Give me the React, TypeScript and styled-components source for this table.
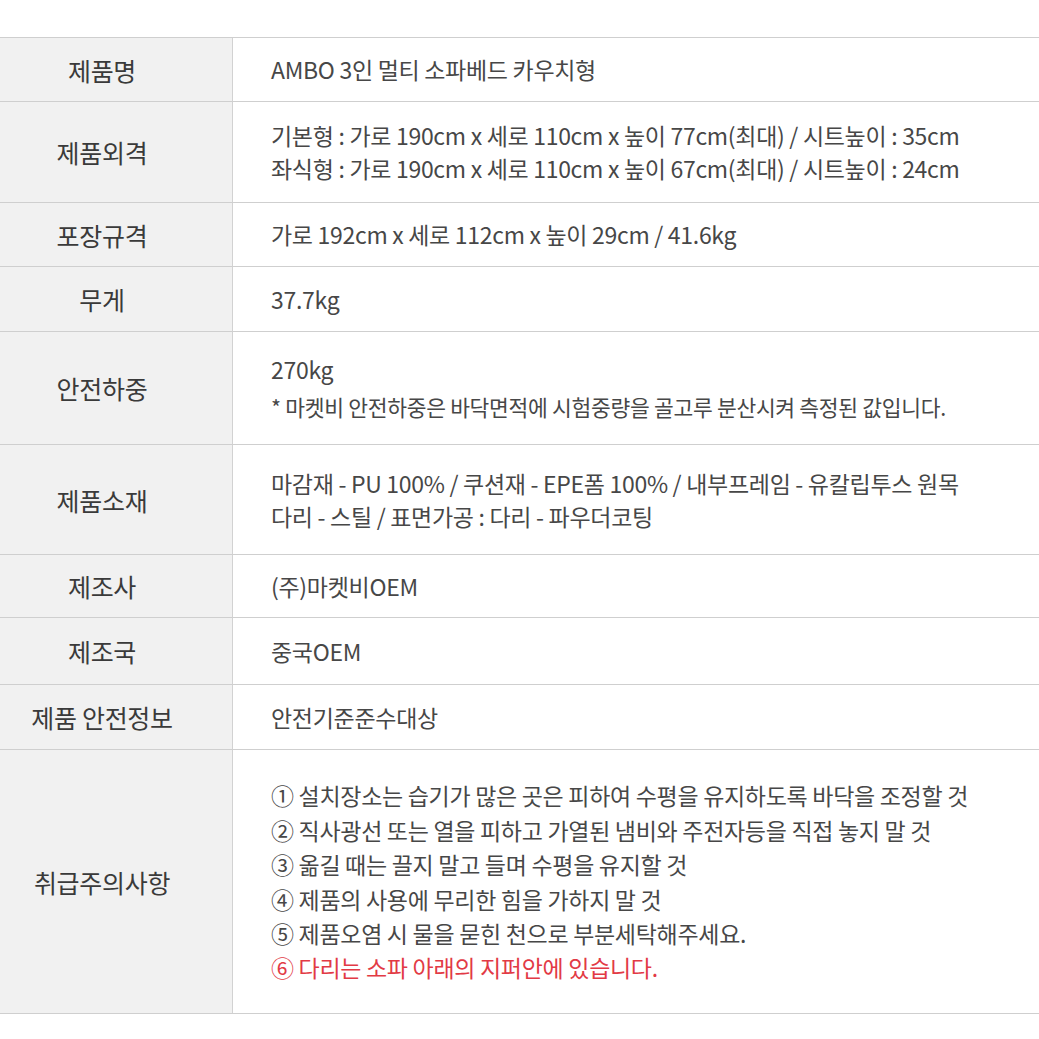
import React from "react";
import styled, { createGlobalStyle } from "styled-components";

const Global = createGlobalStyle`
  html, body { margin: 0; padding: 0; background: #fff; }
  body { font-family: "Noto Sans CJK KR", "Noto Sans", sans-serif; }
`;

const Page = styled.div`
  width: 1039px;
  height: 1039px;
  padding-top: 37px;
  box-sizing: border-box;
  background: #fff;
`;

const Table = styled.div`
  display: grid;
  grid-template-columns: 233px 1fr;
  border-top: 1px solid #cfcfcf;
`;

const Label = styled.div<{ $h: number }>`
  height: ${(p) => p.$h}px;
  box-sizing: border-box;
  padding-right: 28px;
  display: flex;
  align-items: center;
  justify-content: center;
  background: #f1f1f1;
  border-right: 1px solid #d2d2d2;
  border-bottom: 1px solid #cfcfcf;
  color: #3a3a3a;
  font-size: 25px;
  letter-spacing: -0.3px;
  white-space: nowrap;
`;

const Value = styled.div<{ $h: number }>`
  height: ${(p) => p.$h}px;
  box-sizing: border-box;
  display: flex;
  flex-direction: column;
  justify-content: center;
  padding-left: 38px;
  border-bottom: 1px solid #cfcfcf;
  color: #474747;
  font-size: 23px;
  letter-spacing: -0.3px;
`;

const Line = styled.div<{ $lh?: number; $red?: boolean; $small?: boolean }>`
  line-height: ${(p) => p.$lh ?? 33}px;
  color: ${(p) => (p.$red ? "#e23a45" : "inherit")};
  font-size: ${(p) => (p.$small ? 21.5 : 23)}px;
  white-space: nowrap;
`;

type Row = { label: string; h: number; lh?: number; lines: { t: string; red?: boolean; small?: boolean }[] };

const rows: Row[] = [
  { label: "제품명", h: 64, lines: [{ t: "AMBO 3인 멀티 소파베드 카우치형" }] },
  {
    label: "제품외격",
    h: 101,
    lines: [
      { t: "기본형 : 가로 190cm x 세로 110cm x 높이 77cm(최대) / 시트높이 : 35cm" },
      { t: "좌식형 : 가로 190cm x 세로 110cm x 높이 67cm(최대) / 시트높이 : 24cm" },
    ],
  },
  { label: "포장규격", h: 64, lines: [{ t: "가로 192cm x 세로 112cm x 높이 29cm / 41.6kg" }] },
  { label: "무게", h: 65, lines: [{ t: "37.7kg" }] },
  {
    label: "안전하중",
    h: 113,
    lh: 37,
    lines: [
      { t: "270kg" },
      { t: "* 마켓비 안전하중은 바닥면적에 시험중량을 골고루 분산시켜 측정된 값입니다.", small: true },
    ],
  },
  {
    label: "제품소재",
    h: 110,
    lines: [
      { t: "마감재 - PU 100% / 쿠션재 - EPE폼 100% / 내부프레임 - 유칼립투스 원목" },
      { t: "다리 - 스틸 / 표면가공 : 다리 - 파우더코팅" },
    ],
  },
  { label: "제조사", h: 63, lines: [{ t: "(주)마켓비OEM" }] },
  { label: "제조국", h: 67, lines: [{ t: "중국OEM" }] },
  { label: "제품 안전정보", h: 65, lines: [{ t: "안전기준준수대상" }] },
  {
    label: "취급주의사항",
    h: 264,
    lh: 34.4,
    lines: [
      { t: "① 설치장소는 습기가 많은 곳은 피하여 수평을 유지하도록 바닥을 조정할 것" },
      { t: "② 직사광선 또는 열을 피하고 가열된 냄비와 주전자등을 직접 놓지 말 것" },
      { t: "③ 옮길 때는 끌지 말고 들며 수평을 유지할 것" },
      { t: "④ 제품의 사용에 무리한 힘을 가하지 말 것" },
      { t: "⑤ 제품오염 시 물을 묻힌 천으로 부분세탁해주세요." },
      { t: "⑥ 다리는 소파 아래의 지퍼안에 있습니다.", red: true },
    ],
  },
];

export default function App() {
  return (
    <Page>
      <Global />
      <Table>
        {rows.map((r) => (
          <React.Fragment key={r.label}>
            <Label $h={r.h}>{r.label}</Label>
            <Value $h={r.h}>
              {r.lines.map((l, i) => (
                <Line key={i} $lh={r.lh} $red={l.red} $small={l.small}>
                  {l.t}
                </Line>
              ))}
            </Value>
          </React.Fragment>
        ))}
      </Table>
    </Page>
  );
}
